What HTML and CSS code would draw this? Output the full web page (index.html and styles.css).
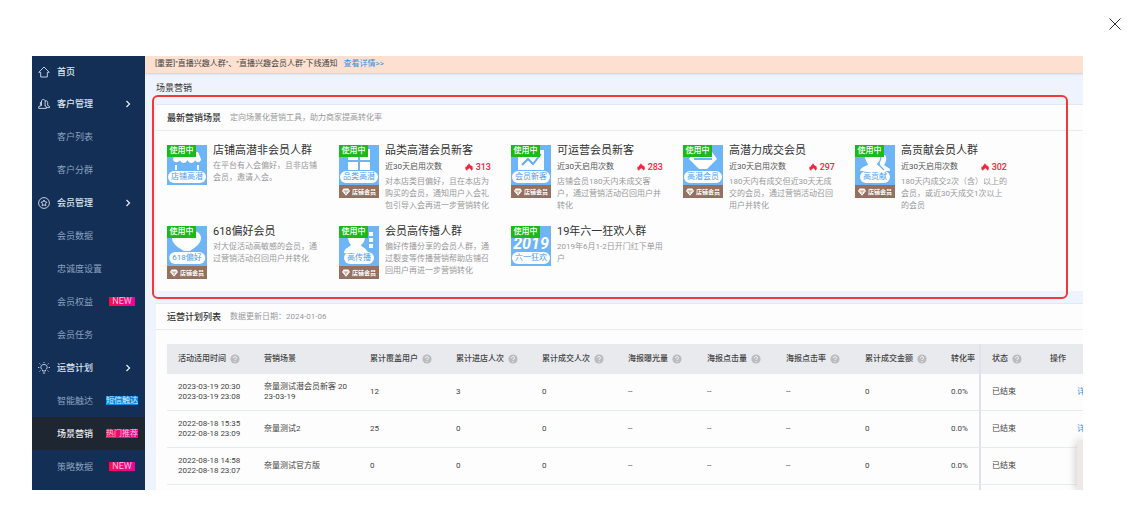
FILE: index.html
```html
<!DOCTYPE html>
<html lang="zh-CN">

<head>
    <meta charset="UTF-8">
    <meta name="viewport" content="width=device-width, initial-scale=1.0">
    <title>场景营销</title>
    <link rel="stylesheet" href="styles.css">
</head>

<body>

    <svg width="0" height="0" class="defs">
        <symbol id="arrow" viewBox="0 0 6 8">
            <path d="M1.5 1l3 3-3 3" fill="none" stroke="#dfe7f0" stroke-width="1.3" />
        </symbol>
        <symbol id="flame" viewBox="0 0 8 8">
            <path d="M3.9 0C4.2 1.8 6 2 6.1 3.2l.8-.6C8.4 5 8 7 6.2 7.8 6.5 6.4 5.4 6 4.3 4.9 3.6 6 2 6.3 2.2 7.8.3 7-.2 5.2.9 3.3l.8.7C1.7 2.2 3.7 1.8 3.9 0z" fill="#f5253c" />
        </symbol>
        <symbol id="gem" viewBox="0 0 8 8">
            <path d="M1.6.5h4.8L8 3 4 7.8 0 3z" fill="#fff" />
            <path d="M1.5 3h5M4 3v3" fill="none" stroke="#947060" stroke-width=".7" />
        </symbol>
        <symbol id="help" viewBox="0 0 10 10">
            <circle cx="5" cy="5" r="4.6" fill="#bcbcbe" />
            <path d="M3.5 4.1c0-2 3-2 3-.2C6.5 5 5 4.9 5 6" fill="none" stroke="#fff" stroke-width="1" />
            <circle cx="5" cy="7.5" r=".6" fill="#fff" />
        </symbol>
    </svg>

    <div class="viewer">
        <div class="toolbar">
            <button class="close" type="button" aria-label="关闭">
                <svg width="12" height="12" viewBox="0 0 12 12">
                    <path d="M.5.5l11 11M11.5.5l-11 11" stroke="#333" stroke-width="1" />
                </svg>
            </button>
        </div>

        <div class="frame">
            <nav class="sidebar">
                <a class="item parent home" href="#">
                    <svg class="icon" viewBox="0 0 12 12">
                        <path d="M.8 6.3L6 1l5.2 5.3H9.3V11H2.7V6.3z" />
                    </svg>首页
                </a>
                <a class="item parent" href="#">
                    <svg class="icon" viewBox="0 0 12 12">
                        <path d="M3.5 7.5V3c0-2 3.6-2 3.6 0v4.5l1 .8M3.5 7.5L.7 8.6v1.8h7.6V8.8L7 7.5M7.1 3c1.8-.6 2.6.4 2.6 1.4v3l1.8 1v1.2H8.3M2.4 4v3.5" />
                    </svg>客户管理
                    <svg class="arrow"><use href="#arrow" /></svg>
                </a>
                <a class="item" href="#">客户列表</a>
                <a class="item" href="#">客户分群</a>
                <a class="item parent" href="#">
                    <svg class="icon" viewBox="0 0 12 12">
                        <circle cx="6" cy="6" r="5.4" />
                        <path d="M6 3l.9 1.9 2.1.3-1.5 1.5.3 2.1L6 7.8l-1.8 1 .3-2.1L3 5.2l2.1-.3z" />
                    </svg>会员管理
                    <svg class="arrow"><use href="#arrow" /></svg>
                </a>
                <a class="item" href="#">会员数据</a>
                <a class="item" href="#">忠诚度设置</a>
                <a class="item" href="#">会员权益<span class="slot"><span class="badge new">NEW</span></span></a>
                <a class="item" href="#">会员任务</a>
                <a class="item parent" href="#">
                    <svg class="icon" viewBox="0 0 12 12">
                        <path d="M4.5 9V8C1.5 5.8 3 2.5 6 2.5S10.5 5.8 7.5 8v1zM4.8 11h2.4M6 0v1M0 5.5h1.3M10.7 5.5H12M1.5 1.5l.9.9M10.5 1.5l-.9.9M1.5 9.5l.9-.9M10.5 9.5l-.9-.9" />
                    </svg>运营计划
                    <svg class="arrow"><use href="#arrow" /></svg>
                </a>
                <a class="item" href="#">智能触达<span class="slot"><span class="badge blue">短信触达</span></span></a>
                <a class="item active" href="#">场景营销<span class="slot"><span class="badge">热门推荐</span></span></a>
                <a class="item" href="#">策略数据<span class="slot"><span class="badge new">NEW</span></span></a>
            </nav>

            <main class="main">
                <div class="notice">
                    <span>[重要]"直播兴趣人群"、"直播兴趣会员人群"下线通知</span>
                    <a href="#">查看详情&gt;&gt;</a>
                </div>
                <h1>场景营销</h1>

                <section class="panel scenes">
                    <div class="panel-head">
                        <h2>最新营销场景</h2>
                        <span>定向场景化营销工具，助力商家提高转化率</span>
                    </div>
                    <div class="cards">
                        <div class="card">
                            <div class="thumb">
                                <svg class="pic" viewBox="0 0 40 40">
                                    <path d="M9 7h22l3 7c0 4-5 4-6 1-1 4-6 4-7.5 0-1.5 4-6.5 4-7.5 0-1 3-7 3-7-1z" fill="#fff" />
                                    <path d="M9 20v5M31 20v5" stroke="#fff" stroke-width="2" />
                                </svg>
                                <span class="tag">使用中</span>
                                <span class="pill">店铺高潜</span>
                            </div>
                            <div class="info">
                                <h3>店铺高潜非会员人群</h3>
                                <p>在平台有入会偏好，且非店铺会员，邀请入会。</p>
                            </div>
                        </div>
                        <div class="card">
                            <div class="thumb">
                                <svg class="pic" viewBox="0 0 40 40">
                                    <path d="M9 4h10v11H9zM21 4h10v11H21zM9 17h10v8H9zM21 17h10v8H21z" fill="#fff" />
                                </svg>
                                <span class="tag">使用中</span>
                                <span class="pill">品类高潜</span>
                                <span class="member"><svg><use href="#gem" /></svg>店铺会员</span>
                            </div>
                            <div class="info">
                                <h3>品类高潜会员新客</h3>
                                <div class="meta">近30天启用次数<b><svg><use href="#flame" /></svg>313</b></div>
                                <p>对本店类目偏好，且在本店为购买的会员，通知用户入会礼包引导入会再进一步营销转化</p>
                            </div>
                        </div>
                        <div class="card">
                            <div class="thumb">
                                <svg class="pic" viewBox="0 0 40 40">
                                    <path d="M7 5h26v20H7z" fill="#fff" />
                                    <path d="M11 20l6-6 5 5 8-10" fill="none" stroke="#5facf3" stroke-width="2" />
                                </svg>
                                <span class="tag">使用中</span>
                                <span class="pill">会员新客</span>
                                <span class="member"><svg><use href="#gem" /></svg>店铺会员</span>
                            </div>
                            <div class="info">
                                <h3>可运营会员新客</h3>
                                <div class="meta">近30天启用次数<b><svg><use href="#flame" /></svg>283</b></div>
                                <p>店铺会员180天内未成交客户，通过营销活动召回用户并转化</p>
                            </div>
                        </div>
                        <div class="card">
                            <div class="thumb">
                                <svg class="pic" viewBox="0 0 40 40">
                                    <path d="M11 7h18l5 7-10 10h-8L6 14z" fill="#fff" />
                                    <path d="M11 14h18" stroke="#6db5f7" stroke-width="2" />
                                </svg>
                                <span class="tag">使用中</span>
                                <span class="pill">高潜会员</span>
                                <span class="member"><svg><use href="#gem" /></svg>店铺会员</span>
                            </div>
                            <div class="info">
                                <h3>高潜力成交会员</h3>
                                <div class="meta">近30天启用次数<b><svg><use href="#flame" /></svg>297</b></div>
                                <p>180天内有成交但近30天无成交的会员，通过营销活动召回用户并转化</p>
                            </div>
                        </div>
                        <div class="card">
                            <div class="thumb">
                                <svg class="pic" viewBox="0 0 40 40">
                                    <path d="M22 10h8c3 4 0 8-1 10l6 4v2h-8z" fill="#fff" />
                                    <path d="M10 10h14c2 4 0 7-2 9 0 2 8 3 8 7H5c0-4 8-5 8-7-3-2-4-6-3-9z" fill="#fff" />
                                    <path d="M26 10c0 4-1 7-3 9l6 6M9 12c1 4 3 6 3 8" fill="none" stroke="#6db5f7" stroke-width="1.3" />
                                </svg>
                                <span class="tag">使用中</span>
                                <span class="pill">高贡献</span>
                                <span class="member"><svg><use href="#gem" /></svg>店铺会员</span>
                            </div>
                            <div class="info">
                                <h3>高贡献会员人群</h3>
                                <div class="meta">近30天启用次数<b><svg><use href="#flame" /></svg>302</b></div>
                                <p>180天内成交2次（含）以上的会员，或近30天成交1次以上的会员</p>
                            </div>
                        </div>
                        <div class="card">
                            <div class="thumb">
                                <svg class="pic" viewBox="0 0 40 40">
                                    <path d="M5 12C5 5 15 3 20 8c5-5 14-3 14 4 0 6-7 10-11 13h-6C12 22 5 18 5 12z" fill="#fff" />
                                </svg>
                                <span class="tag">使用中</span>
                                <span class="pill">618偏好</span>
                                <span class="member"><svg><use href="#gem" /></svg>店铺会员</span>
                            </div>
                            <div class="info">
                                <h3>618偏好会员</h3>
                                <p>对大促活动高敏感的会员，通过营销活动召回用户并转化</p>
                            </div>
                        </div>
                        <div class="card">
                            <div class="thumb">
                                <svg class="pic" viewBox="0 0 40 40">
                                    <path d="M9 10h17c0 4-1 7-4 9 0 2 6 3 7 8H5c0-5 6-6 7-8-2-2-3-5-3-9z" fill="#fff" />
                                    <path d="M30 6h4v4h-4zM30 12h4v4h-4zM30 18h4v4h-4z" fill="#fff" />
                                </svg>
                                <span class="tag">使用中</span>
                                <span class="pill">高传播</span>
                                <span class="member"><svg><use href="#gem" /></svg>店铺会员</span>
                            </div>
                            <div class="info">
                                <h3>会员高传播人群</h3>
                                <p>偏好传播分享的会员人群，通过裂变等传播营销帮助店铺召回用户再进一步营销转化</p>
                            </div>
                        </div>
                        <div class="card">
                            <div class="thumb">
                                <span class="year">2019</span>
                                <span class="tag">使用中</span>
                                <span class="pill">六一狂欢</span>
                            </div>
                            <div class="info">
                                <h3>19年六一狂欢人群</h3>
                                <p>2019年6月1-2日开门红下单用户</p>
                            </div>
                        </div>
                    </div>
                    <div class="highlight"></div>
                </section>

                <section class="panel plans">
                    <div class="panel-head">
                        <h2>运营计划列表</h2>
                        <span>数据更新日期：2024-01-06</span>
                    </div>
                    <table>
                        <colgroup>
                            <col class="w-md">
                            <col class="w-lg">
                            <col class="w-md">
                            <col class="w-md">
                            <col class="w-md">
                            <col class="w-sm">
                            <col class="w-sm">
                            <col class="w-sm">
                            <col class="w-md">
                            <col class="w-rate">
                            <col class="w-state">
                            <col class="w-md">
                        </colgroup>
                        <thead>
                            <tr>
                                <th>活动适用时间<svg><use href="#help" /></svg></th>
                                <th>营销场景</th>
                                <th>累计覆盖用户<svg><use href="#help" /></svg></th>
                                <th>累计进店人次<svg><use href="#help" /></svg></th>
                                <th>累计成交人次<svg><use href="#help" /></svg></th>
                                <th>海报曝光量<svg><use href="#help" /></svg></th>
                                <th>海报点击量<svg><use href="#help" /></svg></th>
                                <th>海报点击率<svg><use href="#help" /></svg></th>
                                <th>累计成交金额<svg><use href="#help" /></svg></th>
                                <th>转化率</th>
                                <th class="fixed">状态<svg><use href="#help" /></svg></th>
                                <th>操作</th>
                            </tr>
                        </thead>
                        <tbody>
                            <tr>
                                <td>2023-03-19 20:30<br>2023-03-19 23:08</td>
                                <td>奈量测试潜会员新客 20<br>23-03-19</td>
                                <td>12</td>
                                <td>3</td>
                                <td>0</td>
                                <td>--</td>
                                <td>--</td>
                                <td>--</td>
                                <td>0</td>
                                <td>0.0%</td>
                                <td class="fixed">已结束</td>
                                <td class="action"><a href="#">详情</a></td>
                            </tr>
                            <tr>
                                <td>2022-08-18 15:35<br>2022-08-18 23:09</td>
                                <td>奈量测试2</td>
                                <td>25</td>
                                <td>0</td>
                                <td>0</td>
                                <td>--</td>
                                <td>--</td>
                                <td>--</td>
                                <td>0</td>
                                <td>0.0%</td>
                                <td class="fixed">已结束</td>
                                <td class="action"><a href="#">详情</a></td>
                            </tr>
                            <tr>
                                <td>2022-08-18 14:58<br>2022-08-18 23:07</td>
                                <td>奈量测试官方版</td>
                                <td>0</td>
                                <td>0</td>
                                <td>0</td>
                                <td>--</td>
                                <td>--</td>
                                <td>--</td>
                                <td>0</td>
                                <td>0.0%</td>
                                <td class="fixed">已结束</td>
                                <td class="action"></td>
                            </tr>
                            <tr>
                                <td></td>
                                <td></td>
                                <td></td>
                                <td></td>
                                <td></td>
                                <td></td>
                                <td></td>
                                <td></td>
                                <td></td>
                                <td></td>
                                <td class="fixed"></td>
                                <td></td>
                            </tr>
                        </tbody>
                    </table>
                </section>
                <div class="float-box"></div>
            </main>
        </div>
    </div>

</body>

</html>
```

FILE: styles.css
```css
* {
    margin: 0;
    padding: 0;
    box-sizing: border-box;
}

body {
    font-family: Roboto, "Noto Sans CJK SC", sans-serif;
    font-size: 8px;
    line-height: 12px;
    color: #444;
    background-color: white;
}

a {
    text-decoration: none;
    color: #2f8fe8;
}

.defs {
    position: absolute;
}

.viewer {
    height: 100vh;
    display: flex;
    flex-direction: column;
    padding: 0 62px 27px 32px;
}

.toolbar {
    height: 56px;
    flex: none;
    display: flex;
    justify-content: flex-end;
    margin-right: -38px;
    padding-top: 18px;
}

.close {
    width: 12px;
    height: 12px;
    border: none;
    background: none;
    cursor: pointer;
}

.close svg {
    display: block;
}

.frame {
    flex: 1;
    min-height: 0;
    display: flex;
    overflow: hidden;
}

/* sidebar */
.sidebar {
    width: 113px;
    flex: none;
    background-color: #132f55;
}

.item {
    height: 33px;
    display: flex;
    align-items: center;
    padding-left: 25px;
    font-size: 9px;
    color: #8ba1bf;
}

.parent {
    padding-left: 6px;
    color: #dbe3ed;
    font-weight: 500;
}

.home {
    height: 31px;
}

.active {
    background-color: #1e2632;
    color: #ececec;
    font-weight: 500;
}

.icon {
    width: 12px;
    height: 12px;
    margin-right: 7px;
    fill: none;
    stroke: #d5deea;
    stroke-width: 0.9;
}

.arrow {
    width: 6px;
    height: 8px;
    margin-left: auto;
    margin-right: 14px;
}

.slot {
    flex: 1;
    display: flex;
    justify-content: center;
    padding-left: 6px;
}

.badge {
    height: 9px;
    flex: none;
    line-height: 9px;
    font-size: 8px;
    font-weight: 400;
    color: #ffc4dc;
    background: linear-gradient(90deg, #ff0a4a, #ee00a0);
    white-space: nowrap;
}

.new {
    font-size: 9px;
    padding: 0 3px;
}

.blue {
    color: #d9efff;
    background: #1284d8;
}

/* content */
.main {
    flex: 1;
    min-width: 0;
    position: relative;
    overflow: hidden;
    background-color: #eff3fd;
}

.notice {
    height: 17px;
    line-height: 15px;
    display: flex;
    gap: 6px;
    padding-left: 10px;
    background-color: #fde0cf;
    box-shadow: 0 1px 2px #c9ccd6;
}

h1 {
    height: 31px;
    line-height: 31px;
    padding-left: 11px;
    font-size: 9px;
    font-weight: 400;
    color: #333;
}

.panel {
    margin-left: 11px;
    background-color: #fdfdfe;
    border-top: 1px solid #e3e7f3;
}

.panel-head {
    height: 26px;
    display: flex;
    align-items: center;
    gap: 9px;
    padding-left: 11px;
    border-bottom: 1px solid #e8ebf5;
    color: #999;
}

h2 {
    font-size: 9px;
    font-weight: 500;
    color: #333;
}

.scenes {
    position: relative;
    margin-bottom: 12px;
}

.highlight {
    position: absolute;
    top: -10px;
    left: -4px;
    right: 15px;
    bottom: -8px;
    border: 2px solid #ee3a38;
    border-radius: 6px;
    pointer-events: none;
}

.cards {
    display: grid;
    grid-template-columns: repeat(auto-fill, 172px);
    row-gap: 14px;
    padding: 14px 11px 12px;
}

.card {
    display: flex;
    align-items: flex-start;
    gap: 6px;
}

.thumb {
    position: relative;
    width: 40px;
    min-height: 40px;
    padding-top: 40px;
    background-color: #6db5f7;
}

.pic {
    position: absolute;
    top: 0;
    left: 0;
    width: 40px;
    height: 40px;
}

.year {
    position: absolute;
    top: 12px;
    left: 0;
    width: 40px;
    text-align: center;
    font-size: 16px;
    font-weight: 700;
    font-style: italic;
    color: white;
}

.tag {
    position: absolute;
    top: 0;
    left: 0;
    width: 29px;
    text-align: center;
    font-weight: 500;
    color: white;
    background-color: #1cb81c;
}

.pill {
    position: absolute;
    top: 26px;
    left: 50%;
    transform: translateX(-50%);
    padding: 0 3px;
    border-radius: 6px;
    white-space: nowrap;
    color: #4ba0ee;
    background-color: white;
}

.member {
    height: 13px;
    display: flex;
    align-items: center;
    justify-content: center;
    gap: 2px;
    font-size: 6px;
    font-weight: 700;
    color: white;
    background-color: #947060;
}

.member svg {
    width: 8px;
    height: 8px;
}

.info {
    width: 108px;
}

h3 {
    font-size: 11px;
    line-height: 12px;
    font-weight: 400;
    color: #333;
    white-space: nowrap;
}

.meta {
    display: flex;
    justify-content: space-between;
    margin-top: 4px;
    padding-right: 2px;
    color: #555;
}

.meta b {
    display: flex;
    align-items: center;
    gap: 3px;
    font-size: 9px;
    font-weight: 500;
    color: #f5253c;
}

.meta svg {
    width: 8px;
    height: 8px;
}

.info p {
    margin-top: 3px;
    color: #999;
}

/* table */
table {
    width: 950px;
    margin: 14px 0 0 11px;
    table-layout: fixed;
    border-collapse: separate;
    border-spacing: 0;
}

.w-sm {
    width: 79px;
}

.w-md {
    width: 86px;
}

.w-lg {
    width: 106px;
}

.w-rate {
    width: 39px;
}

.w-state {
    width: 60px;
}

th {
    height: 30px;
    padding-left: 11px;
    text-align: left;
    font-weight: 500;
    white-space: nowrap;
    background-color: #e9eaee;
}

th svg {
    width: 10px;
    height: 10px;
    margin-left: 4px;
    vertical-align: middle;
}

td {
    height: 37px;
    padding-left: 11px;
    line-height: 10px;
    white-space: nowrap;
    border-bottom: 1px solid #e6eaf7;
}

.fixed {
    border-left: 2px solid #dfe2ee;
}

.action {
    padding-left: 38px;
}

.float-box {
    position: absolute;
    right: 0;
    bottom: 0;
    width: 6px;
    height: 50px;
    border-top-left-radius: 6px;
    background-color: #eee9e7;
    box-shadow: 0 0 10px #b5b5b5;
}
```
